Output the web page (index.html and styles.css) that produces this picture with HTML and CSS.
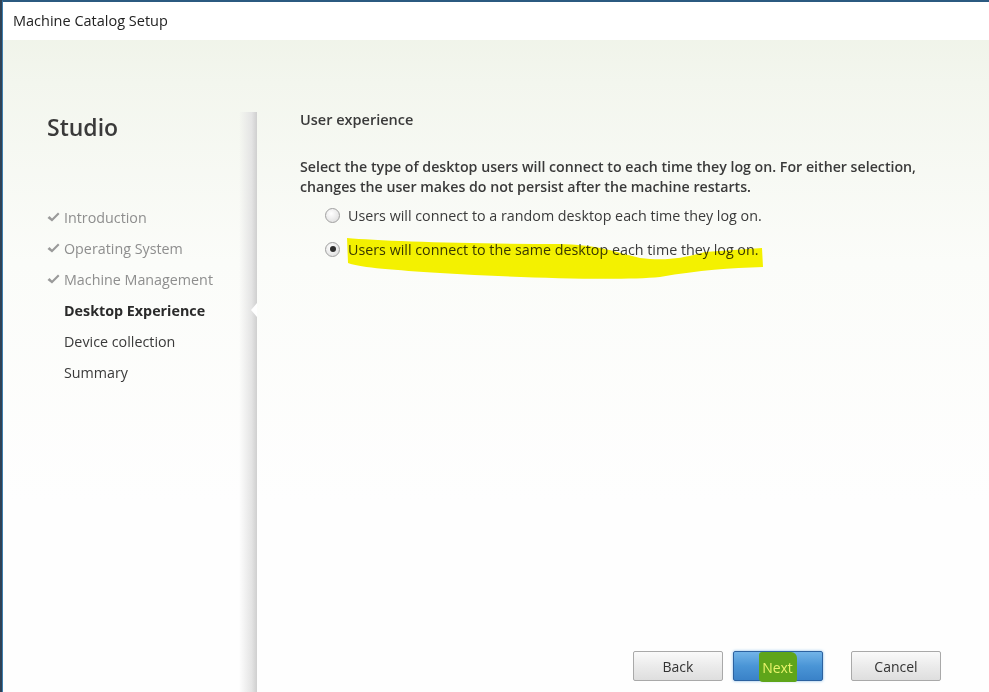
FILE: index.html
```html
<!DOCTYPE html>
<html lang="en">
<head>
    <meta charset="UTF-8">
    <meta name="viewport" content="width=device-width, initial-scale=1.0">
    <title>Machine Catalog Setup</title>
    <link rel="stylesheet" href="styles.css">
</head>
<body>
    <div class="window">
        <div class="titlebar">Machine Catalog Setup</div>

        <div class="main">
            <div class="sidebar">
                <h1>Studio</h1>
                <ul class="steps">
                    <li class="done"><svg class="tick" width="13" height="11" viewBox="0 0 13 11"><path d="M0.5,6 L2.5,4 L5,6.5 L11,0.5 L12.5,2 L5,9.5 Z" fill="#9a9a9a"/></svg>Introduction</li>
                    <li class="done"><svg class="tick" width="13" height="11" viewBox="0 0 13 11"><path d="M0.5,6 L2.5,4 L5,6.5 L11,0.5 L12.5,2 L5,9.5 Z" fill="#9a9a9a"/></svg>Operating System</li>
                    <li class="done"><svg class="tick" width="13" height="11" viewBox="0 0 13 11"><path d="M0.5,6 L2.5,4 L5,6.5 L11,0.5 L12.5,2 L5,9.5 Z" fill="#9a9a9a"/></svg>Machine Management</li>
                    <li class="current">Desktop Experience</li>
                    <li>Device collection</li>
                    <li>Summary</li>
                </ul>
            </div>

            <div class="content">
                <div class="page">
                    <h2>User experience</h2>
                    <p class="intro">Select the type of desktop users will connect to each time they log on. For either selection,<br>changes the user makes do not persist after the machine restarts.</p>

                    <div class="options">
                        <label class="option">
                            <span class="radio"></span>
                            Users will connect to a random desktop each time they log on.
                        </label>
                        <label class="option">
                            <span class="radio checked"></span>
                            Users will connect to the same desktop each time they log on.
                        </label>
                    </div>
                </div>

                <div class="buttons">
                    <button class="btn">Back</button>
                    <button class="btn primary"><span class="mark">Next</span></button>
                    <button class="btn cancel">Cancel</button>
                </div>
            </div>
        </div>

        <!-- marker scribble over the chosen option -->
        <svg class="scribble" width="989" height="692" viewBox="0 0 989 692">
            <path d="M347,238 C380,241 470,244 560,244 C600,245 615,252 640,258 C670,262 690,256 705,252 L762,248 L763,267 C730,268 700,270 660,277 C620,281 520,278 440,273 C395,270 362,268 348,263 Z" fill="#f8f400"/>
        </svg>
    </div>
</body>
</html>
```

FILE: styles.css
```css
body {
    margin: 0;
    height: 100vh;
    background-color: #2f4256;
    font-family: "Open Sans", "Noto Sans", sans-serif;
    color: #3a3a3a;
    overflow: hidden;
}
.window {
    position: relative;
    display: flex;
    flex-direction: column;
    height: 100vh;
    margin-left: 2px;
    box-sizing: border-box;
    border-left: 1px solid #3f7fae;
    border-top: 2px solid #2b5a80;
    background: linear-gradient(#eef2e6 0px, #f3f6ee 80px, #fbfcf9 260px, #fefefe 500px);
}
.titlebar {
    height: 38px;
    line-height: 38px;
    padding-left: 10px;
    background-color: #fff;
    font-size: 14.5px;
    color: #222;
}
.main {
    flex: 1;
    display: flex;
}
.sidebar {
    position: relative;
    width: 254px;
    flex-shrink: 0;
    padding-top: 72px;
    box-sizing: border-box;
}
.sidebar::after {
    content: "";
    position: absolute;
    right: 0;
    top: 72px;
    bottom: 0;
    width: 18px;
    background: linear-gradient(to right, rgba(255, 255, 255, 0), #e4e4e4 70%, #cfcfcf);
}
.sidebar::before {
    content: "";
    position: absolute;
    right: 0;
    top: 263px;
    border-top: 7px solid transparent;
    border-bottom: 7px solid transparent;
    border-right: 6px solid #fff;
    z-index: 1;
}
.sidebar h1 {
    margin: 0 0 60px 44px;
    font-size: 23px;
    line-height: 30px;
    font-weight: 600;
    color: #3a3a3a;
}
.steps {
    list-style: none;
    margin: 0;
    padding: 0 0 0 61px;
}
.steps li {
    position: relative;
    height: 31px;
    line-height: 31px;
    font-size: 14.3px;
    color: #3a3a3a;
    white-space: nowrap;
}
.steps li.done {
    color: #8e8e8e;
}
.steps li.current {
    font-weight: 700;
    color: #2a2a2a;
}
.tick {
    position: absolute;
    left: -17px;
    top: 10px;
}
.content {
    flex: 1;
    display: flex;
    flex-direction: column;
    justify-content: space-between;
}
.page {
    padding: 70px 0 0 43px;
}
.page h2 {
    margin: 0;
    font-size: 14.5px;
    line-height: 20px;
    font-weight: 600;
    color: #3a3a3a;
}
.intro {
    margin: 27px 0 0 0;
    font-size: 14.2px;
    line-height: 20px;
    font-weight: 600;
    color: #3a3a3a;
    white-space: nowrap;
}
.options {
    padding-left: 25px;
    margin-top: 1px;
}
.option {
    display: flex;
    align-items: center;
    height: 34px;
    font-size: 14.3px;
    color: #3a3a3a;
    white-space: nowrap;
}
.radio {
    width: 15px;
    height: 15px;
    margin-right: 8px;
    border: 1px solid #a0a0a0;
    border-radius: 50%;
    background: radial-gradient(circle at 40% 35%, #ffffff, #e4e4e4 70%, #d6d6d6);
    box-sizing: border-box;
    display: flex;
    align-items: center;
    justify-content: center;
}
.radio.checked::after {
    content: "";
    width: 6px;
    height: 6px;
    border-radius: 50%;
    background-color: #2e2e2e;
}
.buttons {
    display: flex;
    justify-content: flex-end;
    padding: 0 48px 11px 0;
}
.btn {
    width: 90px;
    height: 30px;
    margin-left: 10px;
    border: 1px solid #a9a9a9;
    border-radius: 2px;
    background: linear-gradient(#fafafa, #ebebeb 50%, #dedede);
    font-family: "Open Sans", "Noto Sans", sans-serif;
    font-size: 14px;
    color: #333;
    padding: 0;
}
.btn.primary {
    border-color: #2c62a0;
    background: linear-gradient(#72b4e8, #4a95d6 50%, #3a82c8);
    box-shadow: 0 0 3px #7fb8e6;
}
.btn.cancel {
    margin-left: 28px;
}
.mark {
    display: inline-block;
    padding: 6px 4px 5px 3px;
    background-color: #5fa51a;
    color: #e8f36a;
    border-radius: 3px 6px 2px 4px;
}
.scribble {
    position: absolute;
    left: -3px;
    top: -2px;
    pointer-events: none;
    mix-blend-mode: multiply;
}
```
